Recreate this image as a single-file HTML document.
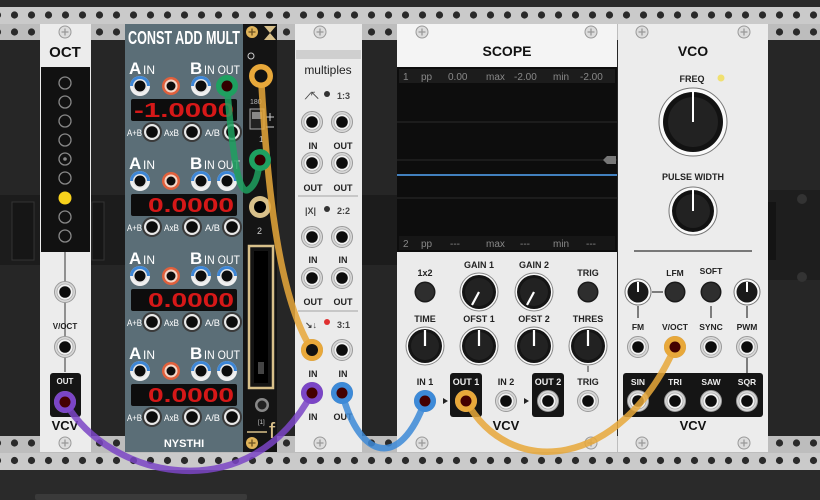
<!DOCTYPE html>
<html><head><meta charset="utf-8"><style>
html,body{margin:0;padding:0;background:#2a2a2a;}
svg{display:block}
text{font-family:"Liberation Sans",sans-serif;}
</style></head><body>
<svg width="820" height="500" viewBox="0 0 820 500" xmlns="http://www.w3.org/2000/svg">
<defs>
<pattern id="holes" x="6" y="6.5" width="17" height="17" patternUnits="userSpaceOnUse">
<circle cx="8.5" cy="8.5" r="3.6" fill="#2a2a2a"/>
</pattern>
<pattern id="holesb" x="6" y="434.5" width="17" height="17.5" patternUnits="userSpaceOnUse">
<circle cx="8.5" cy="8.5" r="3.6" fill="#2a2a2a"/>
</pattern>
<g id="jack"><circle r="10.5" fill="#d8d8d8" stroke="#9a9a9a" stroke-width="1"/><circle r="8" fill="#f2f2f2" stroke="#aaa" stroke-width="0.8"/><circle r="5.8" fill="#0c0c0c"/></g>
<g id="jackd"><circle r="10" fill="#3a3a3a"/><circle r="8" fill="#e8e8e8"/><circle r="5.8" fill="#0c0c0c"/></g>
<g id="jb"><circle r="10" fill="#f0f0f0"/><path d="M-10,0 A10,10 0 0 1 10,0 Z" fill="#3d86d6"/><circle r="7" fill="#e6e6e6"/><circle r="5.5" fill="#0c0c0c"/></g>
<g id="jr"><circle r="9" fill="#e0603c"/><circle r="6.5" fill="#f3d6c8"/><circle r="4.5" fill="#0c0c0c"/></g>
<g id="btn"><circle r="10.5" fill="#1a1a1a"/><circle r="9" fill="#2e2e2e"/></g>
<g id="knob"><circle r="19" fill="#fafafa" stroke="#888" stroke-width="1"/><circle r="17" fill="#151515"/><circle r="14" fill="#222"/></g>
<g id="grp">
<text x="129" y="74" font-size="17" font-weight="bold" fill="#fff">A</text><text x="143" y="74" font-size="12" fill="#fff">IN</text>
<text x="190" y="74" font-size="17" font-weight="bold" fill="#fff">B</text><text x="204" y="74" font-size="12" fill="#fff" textLength="36" lengthAdjust="spacingAndGlyphs">IN OUT</text>
<use href="#jb" x="140" y="86"/><use href="#jr" x="171" y="86"/><use href="#jb" x="201" y="86"/><use href="#jb" x="227" y="86"/>
<rect x="131" y="99" width="106" height="22" fill="#0d0d0d" rx="2"/>
<text x="127" y="136" font-size="9" fill="#fff" textLength="15" lengthAdjust="spacingAndGlyphs">A+B</text><use href="#jackd" x="152" y="132"/>
<text x="164" y="136" font-size="9" fill="#fff" textLength="15" lengthAdjust="spacingAndGlyphs">AxB</text><use href="#jackd" x="192" y="132"/>
<text x="205" y="136" font-size="9" fill="#fff" textLength="15" lengthAdjust="spacingAndGlyphs">A/B</text><use href="#jackd" x="232" y="132"/>
</g>
</defs>

<!-- background -->
<rect width="820" height="500" fill="#2a2a2a"/>
<rect x="0" y="40" width="820" height="396" fill="#262626"/>
<rect x="0" y="195" width="125" height="70" fill="#1c1c1c"/>
<rect x="12" y="202" width="22" height="58" fill="#161616" stroke="#333"/>
<rect x="92" y="202" width="12" height="58" fill="#161616" stroke="#333"/>
<rect x="362" y="195" width="35" height="70" fill="#1c1c1c"/>
<rect x="768" y="190" width="52" height="90" fill="#1e1e1e"/>
<rect x="768" y="202" width="8" height="58" fill="#141414"/>
<circle cx="802" cy="199" r="5" fill="#333"/><circle cx="802" cy="277" r="5" fill="#333"/>

<!-- rails -->
<rect x="0" y="0" width="820" height="7" fill="#2a2a2a"/>
<rect x="0" y="7" width="820" height="17" fill="#cacaca"/>
<rect x="0" y="24" width="820" height="16" fill="#bdbdbd"/>
<rect x="0" y="7" width="820" height="33" fill="url(#holes)"/>
<rect x="0" y="436" width="820" height="17" fill="#bdbdbd"/>
<rect x="0" y="453" width="820" height="17" fill="#cacaca"/>
<rect x="0" y="436" width="820" height="34" fill="url(#holesb)"/>
<rect x="0" y="470" width="820" height="30" fill="#2a2a2a"/>
<rect x="35" y="494" width="212" height="6" fill="#3a3a3a" rx="2"/>

<!-- OCT -->
<rect x="40" y="24" width="51" height="428" fill="#ececec"/>
<rect x="41" y="67" width="49" height="185" fill="#111"/>
<line x1="65" y1="252" x2="65" y2="372" stroke="#333" stroke-width="1"/>
<circle cx="65" cy="32" r="6" fill="#ddd" stroke="#999"/><path d="M61.5 32h7M65 28.5v7" stroke="#999" stroke-width="1.3"/>
<text x="65" y="57" font-size="15" font-weight="bold" text-anchor="middle" fill="#111">OCT</text>
<g fill="none" stroke="#888" stroke-width="1.3">
<circle cx="65" cy="83" r="6"/><circle cx="65" cy="102" r="6"/><circle cx="65" cy="121" r="6"/><circle cx="65" cy="140" r="6"/><circle cx="65" cy="159" r="6"/><circle cx="65" cy="217" r="6"/><circle cx="65" cy="236" r="6"/><circle cx="65" cy="178" r="6"/>
</g>
<circle cx="65" cy="159" r="1.8" fill="#888"/>
<circle cx="65" cy="198" r="6.5" fill="#f8d21c"/>
<use href="#jack" x="65" y="292"/>
<text x="65" y="329" font-size="8" font-weight="bold" text-anchor="middle" fill="#222">V/OCT</text>
<use href="#jack" x="65" y="347"/>
<rect x="50" y="373" width="31" height="44" rx="3" fill="#151515"/>
<text x="65" y="384" font-size="8" font-weight="bold" text-anchor="middle" fill="#eee">OUT</text>
<use href="#jack" x="65" y="402"/>
<text x="65" y="430" font-size="13" font-weight="bold" text-anchor="middle" fill="#111">VCV</text>
<circle cx="65" cy="443" r="6" fill="#ddd" stroke="#999"/><path d="M61.5 443h7M65 439.5v7" stroke="#999" stroke-width="1.3"/>

<!-- NYSTHI -->
<rect x="125" y="24" width="118" height="428" fill="#5b6e77"/>
<text x="128" y="44" font-size="18" font-weight="bold" fill="#fff" textLength="112" lengthAdjust="spacingAndGlyphs">CONST ADD MULT</text>
<use href="#grp"/><use href="#grp" y="95"/><use href="#grp" y="190"/><use href="#grp" y="285"/>
<g font-family="Liberation Mono" font-size="20" font-weight="bold" fill="#d61818">
<text x="134" y="117" textLength="100" lengthAdjust="spacingAndGlyphs">-1.0000</text>
<text x="148" y="212" textLength="86" lengthAdjust="spacingAndGlyphs">0.0000</text>
<text x="148" y="307" textLength="86" lengthAdjust="spacingAndGlyphs">0.0000</text>
<text x="148" y="402" textLength="86" lengthAdjust="spacingAndGlyphs">0.0000</text>
</g>
<text x="184" y="447" font-size="11" font-weight="bold" text-anchor="middle" fill="#fff">NYSTHI</text>

<!-- black module -->
<rect x="243" y="24" width="34" height="428" fill="#141414"/>
<circle cx="252" cy="32" r="6" fill="#e0b45a"/><path d="M248.5 32h7M252 28.5v7" stroke="#6a5020" stroke-width="1.3"/>
<path d="M264 26h12l-12 14h12z" fill="#d8c08a"/>
<circle cx="251" cy="56" r="3" fill="none" stroke="#ccc"/>
<text x="250" y="104" font-size="7" fill="#bbb">180</text>
<rect x="250" y="109" width="14" height="20" fill="#222" stroke="#aaa"/><rect x="252" y="112" width="10" height="7" fill="#888"/>
<path d="M266 117h8M270 113v8M266 127h8" stroke="#ccc"/>
<text x="259" y="142" font-size="8" fill="#ccc">1</text>
<circle cx="260" cy="207" r="11" fill="#d8c08a"/><circle cx="260" cy="207" r="6" fill="#000"/>
<text x="257" y="234" font-size="9" fill="#ccc">2</text>
<rect x="249" y="246" width="24" height="142" fill="none" stroke="#d8c08a" stroke-width="2.5"/>
<rect x="254" y="251" width="14" height="132" fill="#000"/>
<rect x="258" y="362" width="6" height="12" fill="#444"/>
<circle cx="262" cy="405" r="7" fill="#888"/><circle cx="262" cy="405" r="4.5" fill="#222"/>
<text x="258" y="424" font-size="6" fill="#ccc">[1]</text>
<path d="M247 432h20" stroke="#d8c08a" stroke-width="1.5"/>
<text x="269" y="438" font-size="22" fill="#d8c08a" font-family="Liberation Serif">f</text>
<circle cx="252" cy="443" r="6" fill="#e0b45a"/><path d="M248.5 443h7M252 439.5v7" stroke="#6a5020" stroke-width="1.3"/>

<!-- multiples -->
<rect x="295" y="24" width="67" height="428" fill="#ebebeb"/>
<circle cx="320" cy="32" r="6" fill="#ddd" stroke="#999"/><path d="M316.5 32h7M320 28.5v7" stroke="#999" stroke-width="1.3"/>
<rect x="296" y="50" width="65" height="9" fill="#cfcfcf"/>
<text x="328" y="74" font-size="12" text-anchor="middle" fill="#222">multiples</text>
<g font-size="9" fill="#444" font-weight="bold">
<text x="305" y="99">⟋↖</text><circle cx="327" cy="94" r="3" fill="#333"/><text x="337" y="99">1:3</text>
<text x="305" y="214">|X|</text><circle cx="327" cy="209" r="3" fill="#333"/><text x="337" y="214">2:2</text>
<text x="305" y="328">↘↓</text><circle cx="327" cy="322" r="3" fill="#e03030"/><text x="337" y="328">3:1</text>
</g>
<use href="#jack" x="312" y="122"/><use href="#jack" x="342" y="122"/>
<use href="#jack" x="312" y="163"/><use href="#jack" x="342" y="163"/>
<use href="#jack" x="312" y="237"/><use href="#jack" x="342" y="237"/>
<use href="#jack" x="312" y="278"/><use href="#jack" x="342" y="278"/>
<use href="#jack" x="312" y="350"/><use href="#jack" x="342" y="350"/>
<use href="#jack" x="312" y="393"/><use href="#jack" x="342" y="393"/>
<g font-size="9" font-weight="bold" fill="#222" text-anchor="middle">
<text x="313" y="149">IN</text><text x="343" y="149">OUT</text><text x="313" y="191">OUT</text><text x="343" y="191">OUT</text>
<text x="313" y="263">IN</text><text x="343" y="263">IN</text><text x="313" y="305">OUT</text><text x="343" y="305">OUT</text>
<text x="313" y="377">IN</text><text x="343" y="377">IN</text><text x="313" y="420">IN</text><text x="343" y="420">OUT</text>
</g>
<line x1="298" y1="196" x2="358" y2="196" stroke="#bbb" stroke-width="1.5"/>
<line x1="298" y1="311" x2="358" y2="311" stroke="#bbb" stroke-width="1.5"/>
<circle cx="320" cy="443" r="6" fill="#ddd" stroke="#999"/><path d="M316.5 443h7M320 439.5v7" stroke="#999" stroke-width="1.3"/>

<!-- SCOPE -->
<rect x="397" y="24" width="220" height="428" fill="#ebebeb"/>
<rect x="397" y="24" width="220" height="43" fill="#f4f4f4"/>
<circle cx="422" cy="32" r="6" fill="#ddd" stroke="#999"/><path d="M418.5 32h7M422 28.5v7" stroke="#999" stroke-width="1.3"/>
<circle cx="591" cy="32" r="6" fill="#ddd" stroke="#999"/><path d="M587.5 32h7M591 28.5v7" stroke="#999" stroke-width="1.3"/>
<text x="507" y="56" font-size="14" font-weight="bold" text-anchor="middle" fill="#111">SCOPE</text>
<rect x="397" y="67" width="220" height="185" fill="#0d0d0d"/>
<rect x="399" y="69" width="216" height="14" fill="#1c1c1c"/>
<rect x="399" y="236" width="216" height="14" fill="#161616"/>
<g stroke="#2c2c2c" stroke-width="1"><line x1="397" y1="122" x2="617" y2="122"/><line x1="397" y1="160" x2="617" y2="160"/><line x1="397" y1="198" x2="617" y2="198"/></g>
<line x1="397" y1="175" x2="617" y2="175" stroke="#4a90d8" stroke-width="1.8"/>
<path d="M603 160l4-4h9v8h-9z" fill="#777"/>
<g font-family="Liberation Mono" font-size="10" fill="#888">
<text x="403" y="80">1</text><text x="421" y="80">pp</text><text x="448" y="80">0.00</text><text x="486" y="80">max</text><text x="514" y="80">-2.00</text><text x="553" y="80">min</text><text x="580" y="80">-2.00</text>
<text x="403" y="247">2</text><text x="421" y="247">pp</text><text x="450" y="247">---</text><text x="486" y="247">max</text><text x="520" y="247">---</text><text x="553" y="247">min</text><text x="586" y="247">---</text>
</g>
<g font-size="9" font-weight="bold" fill="#222" text-anchor="middle">
<text x="425" y="276">1x2</text><text x="479" y="268">GAIN 1</text><text x="534" y="268">GAIN 2</text><text x="588" y="276">TRIG</text>
<text x="425" y="322">TIME</text><text x="479" y="322">OFST 1</text><text x="534" y="322">OFST 2</text><text x="588" y="322">THRES</text>
<text x="425" y="385">IN 1</text><text x="506" y="385">IN 2</text><text x="588" y="385">TRIG</text>
</g>
<use href="#btn" x="425" y="292"/><use href="#btn" x="588" y="292"/>
<use href="#knob" x="479" y="292"/><use href="#knob" x="534" y="292"/>
<use href="#knob" x="425" y="346"/><use href="#knob" x="479" y="346"/><use href="#knob" x="534" y="346"/><use href="#knob" x="588" y="346"/>
<g stroke="#fff" stroke-width="2.2"><line x1="479" y1="292" x2="472" y2="305"/><line x1="534" y1="292" x2="527" y2="305"/>
<line x1="425" y1="346" x2="425" y2="330"/><line x1="479" y1="346" x2="479" y2="330"/><line x1="534" y1="346" x2="534" y2="330"/><line x1="588" y1="346" x2="588" y2="330"/></g>
<line x1="588" y1="366" x2="588" y2="372" stroke="#333"/>
<rect x="450" y="373" width="32" height="44" rx="3" fill="#151515"/>
<text x="466" y="385" font-size="9" font-weight="bold" text-anchor="middle" fill="#eee">OUT 1</text>
<rect x="532" y="373" width="32" height="44" rx="3" fill="#151515"/>
<text x="548" y="385" font-size="9" font-weight="bold" text-anchor="middle" fill="#eee">OUT 2</text>
<use href="#jack" x="425" y="401"/><use href="#jack" x="466" y="401"/><use href="#jack" x="506" y="401"/><use href="#jack" x="548" y="401"/><use href="#jack" x="588" y="401"/>
<path d="M443 398l5 3-5 3z M524 398l5 3-5 3z" fill="#222"/>
<text x="506" y="430" font-size="13" font-weight="bold" text-anchor="middle" fill="#111">VCV</text>
<circle cx="422" cy="443" r="6" fill="#ddd" stroke="#999"/><path d="M418.5 443h7M422 439.5v7" stroke="#999" stroke-width="1.3"/>
<circle cx="591" cy="443" r="6" fill="#ddd" stroke="#999"/><path d="M587.5 443h7M591 439.5v7" stroke="#999" stroke-width="1.3"/>

<!-- VCO -->
<rect x="618" y="24" width="150" height="428" fill="#ececec"/>
<circle cx="642" cy="32" r="6" fill="#ddd" stroke="#999"/><path d="M638.5 32h7M642 28.5v7" stroke="#999" stroke-width="1.3"/>
<circle cx="744" cy="32" r="6" fill="#ddd" stroke="#999"/><path d="M740.5 32h7M744 28.5v7" stroke="#999" stroke-width="1.3"/>
<text x="693" y="56" font-size="14" font-weight="bold" text-anchor="middle" fill="#111">VCO</text>
<text x="692" y="82" font-size="9" font-weight="bold" text-anchor="middle" fill="#222">FREQ</text>
<circle cx="721" cy="78" r="3.5" fill="#f0e070"/>
<circle cx="693" cy="122" r="34" fill="#fafafa" stroke="#777" stroke-width="1"/><circle cx="693" cy="122" r="30" fill="#121212"/><circle cx="693" cy="122" r="25" fill="#222"/>
<line x1="693" y1="122" x2="693" y2="91" stroke="#fff" stroke-width="2"/>
<text x="693" y="180" font-size="9" font-weight="bold" text-anchor="middle" fill="#222">PULSE WIDTH</text>
<circle cx="693" cy="211" r="24" fill="#fafafa" stroke="#777"/><circle cx="693" cy="211" r="21" fill="#121212"/><circle cx="693" cy="211" r="17" fill="#222"/>
<line x1="693" y1="211" x2="693" y2="189" stroke="#fff" stroke-width="2"/>
<line x1="634" y1="251" x2="752" y2="251" stroke="#333" stroke-width="1.3"/>
<g font-size="8.5" font-weight="bold" fill="#222" text-anchor="middle">
<text x="675" y="276">LFM</text><text x="711" y="274">SOFT</text>
<text x="638" y="330">FM</text><text x="675" y="330">V/OCT</text><text x="711" y="330">SYNC</text><text x="747" y="330">PWM</text>
</g>
<circle cx="638" cy="292" r="13" fill="#fafafa" stroke="#777"/><circle cx="638" cy="292" r="10.5" fill="#1a1a1a"/><line x1="638" y1="292" x2="638" y2="282" stroke="#fff" stroke-width="2"/>
<circle cx="747" cy="292" r="13" fill="#fafafa" stroke="#777"/><circle cx="747" cy="292" r="10.5" fill="#1a1a1a"/><line x1="747" y1="292" x2="747" y2="282" stroke="#fff" stroke-width="2"/>
<use href="#btn" x="675" y="292"/><use href="#btn" x="711" y="292"/>
<g stroke="#333" stroke-width="1.2"><line x1="652" y1="292" x2="663" y2="292"/><line x1="638" y1="306" x2="638" y2="318"/><line x1="711" y1="306" x2="711" y2="318"/><line x1="747" y1="306" x2="747" y2="318"/><line x1="747" y1="358" x2="747" y2="373"/></g>
<use href="#jack" x="638" y="347"/><use href="#jack" x="675" y="347"/><use href="#jack" x="711" y="347"/><use href="#jack" x="747" y="347"/>
<rect x="623" y="373" width="140" height="44" rx="3" fill="#151515"/>
<g font-size="8.5" font-weight="bold" fill="#eee" text-anchor="middle"><text x="638" y="385">SIN</text><text x="675" y="385">TRI</text><text x="711" y="385">SAW</text><text x="747" y="385">SQR</text></g>
<use href="#jack" x="638" y="401"/><use href="#jack" x="675" y="401"/><use href="#jack" x="711" y="401"/><use href="#jack" x="747" y="401"/>
<text x="693" y="430" font-size="13" font-weight="bold" text-anchor="middle" fill="#111">VCV</text>
<circle cx="642" cy="443" r="6" fill="#ddd" stroke="#999"/><path d="M638.5 443h7M642 439.5v7" stroke="#999" stroke-width="1.3"/>
<circle cx="744" cy="443" r="6" fill="#ddd" stroke="#999"/><path d="M740.5 443h7M744 439.5v7" stroke="#999" stroke-width="1.3"/>

<!-- cables -->
<g fill="none" stroke-linecap="round" stroke-width="6.5" opacity="0.85">
<path d="M261 76 C 268 200, 280 300, 312 350" stroke="#e8a83a"/>
<path d="M227 86 C 232 150, 238 195, 248 190 C 256 185, 258 175, 260 160" stroke="#1ea060"/>
<path d="M65 402 C 110 480, 250 510, 312 393" stroke="#7b45c6"/>
<path d="M342 393 C 360 460, 400 470, 425 401" stroke="#3d8ad8"/>
<path d="M466 401 C 510 480, 620 470, 675 347" stroke="#e8a83a"/>
</g>
<g>
<circle cx="261" cy="76" r="12" fill="#e8a83a"/><circle cx="261" cy="76" r="6.5" fill="#111"/>
<circle cx="227" cy="86" r="11" fill="#1ea060"/><circle cx="227" cy="86" r="5.5" fill="#300"/>
<circle cx="260" cy="160" r="11" fill="#1ea060"/><circle cx="260" cy="160" r="5.5" fill="#300"/>
<circle cx="312" cy="350" r="11" fill="#e8a83a"/><circle cx="312" cy="350" r="6" fill="#111"/>
<circle cx="65" cy="402" r="11" fill="#7b45c6"/><circle cx="65" cy="402" r="5.5" fill="#400"/>
<circle cx="312" cy="393" r="11" fill="#7b45c6"/><circle cx="312" cy="393" r="5.5" fill="#400"/>
<circle cx="342" cy="393" r="11" fill="#3d8ad8"/><circle cx="342" cy="393" r="5.5" fill="#400"/>
<circle cx="425" cy="401" r="11" fill="#3d8ad8"/><circle cx="425" cy="401" r="5.5" fill="#400"/>
<circle cx="466" cy="401" r="11" fill="#e8a83a"/><circle cx="466" cy="401" r="5.5" fill="#400"/>
<circle cx="675" cy="347" r="11" fill="#e8a83a"/><circle cx="675" cy="347" r="5.5" fill="#400"/>
</g>
</svg>
</body></html>
